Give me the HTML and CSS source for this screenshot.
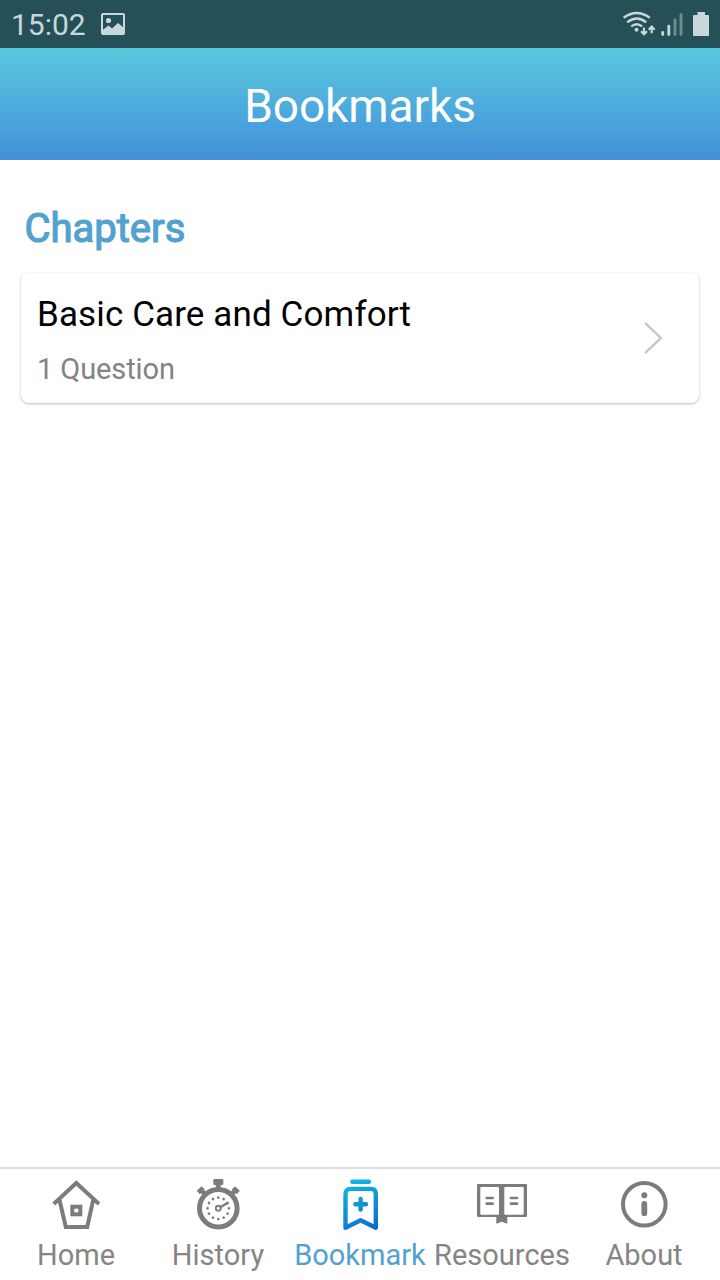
FILE: index.html
```html
<!DOCTYPE html>
<html lang="en">
<head>
<meta charset="utf-8">
<title>Bookmarks</title>
<link rel="stylesheet" href="styles.css">
</head>
<body>
<div class="screen">
  <div class="status">
    <span class="clock">15:02</span>
    <svg class="photo" width="24" height="22" viewBox="0 0 24 22">
      <rect x="1" y="1" width="22" height="20" rx="1" fill="none" stroke="currentColor" stroke-width="2"/>
      <circle cx="7.5" cy="7.5" r="2.6" fill="currentColor"/>
      <path d="M1 17.5 L7.5 12.5 L11 15.5 L17 10 L23 15 V21 H1 Z" fill="currentColor"/>
    </svg>
    <svg class="signals" width="110" height="48" viewBox="0 0 110 48">
      <g fill="none" stroke="currentColor" stroke-width="2.4">
        <path d="M13.6 17.8 Q26.7 8.2 39.8 17.8"/>
        <path d="M17.2 22.4 Q26.7 14.8 36.2 22.4"/>
        <path d="M21.2 26.4 Q26.7 22 32.2 26.4"/>
        <path d="M34 27.5 V34 M31 31.2 L34 34.3 L37 31.2 M41.7 33.3 V27 M38.7 29.7 L41.7 26.6 L44.7 29.7" stroke-width="2.1"/>
      </g>
      <circle cx="26.5" cy="29.8" r="2" fill="currentColor"/>
      <g stroke="currentColor" stroke-width="2.9" stroke-linecap="round">
        <path d="M52.7 32.4 V34.6 M58.8 26.3 V34.6"/>
        <path d="M65 20 V34.6 M71 14.6 V34.6" opacity=".45"/>
      </g>
      <path d="M84 15 H87.5 V12 H95 V15 H98 Q99 15 99 16 V35 Q99 36 98 36 H84 Q83 36 83 35 V16 Q83 15 84 15 Z" fill="currentColor"/>
    </svg>
  </div>
  <header class="header"><h1 class="title">Bookmarks</h1></header>
  <main class="content">
    <h2 class="section">Chapters</h2>
    <div class="card">
      <div class="info">
        <div class="name">Basic Care and Comfort</div>
        <div class="count">1 Question</div>
      </div>
      <svg class="chevron" width="20" height="34" viewBox="0 0 20 34">
        <path d="M1 1.8 L16.8 17 L1 32.2" fill="none" stroke="#c7c7c7" stroke-width="2.4"/>
      </svg>
    </div>
  </main>
  <nav class="tabs">
    <a class="tab">
      <svg class="icon" viewBox="0 0 60 56" fill="none" stroke="currentColor" stroke-width="4">
        <path d="M7.7 28 L30.3 7 L53 28"/>
        <path d="M13.5 24 L19.8 51 H41.2 L47.2 24"/>
        <rect x="26.3" y="30.7" width="8" height="7.6"/>
      </svg>
      <span class="label">Home</span>
    </a>
    <a class="tab">
      <svg class="icon" viewBox="0 0 60 56" fill="none" stroke="currentColor">
        <circle cx="30.3" cy="32.3" r="18.8" stroke-width="5"/>
        <circle cx="30.3" cy="32.3" r="10.7" stroke-width="2.7" stroke-linecap="round" pathLength="120" stroke-dasharray="0.01 9.99"/>
        <circle cx="30.3" cy="32.3" r="2.5" stroke-width="1.9"/>
        <path d="M32.7 31 L39 27.3" stroke-width="2.4" stroke-linecap="round"/>
        <path d="M30.3 8 V15" stroke-width="5"/>
        <rect x="25.3" y="3" width="10" height="6" rx="1.2" fill="currentColor" stroke="none"/>
        <path d="M10.3 16.5 L15.2 11.8 M13 14 L17.5 18.6 M50.3 16.5 L45.4 11.8 M47.6 14 L43.1 18.6" stroke-width="4.6"/>
      </svg>
      <span class="label">History</span>
    </a>
    <a class="tab active">
      <svg class="icon" viewBox="0 0 60 56" fill="none" stroke="url(#blue)" stroke-width="4.4" stroke-linecap="round" stroke-linejoin="round">
        <defs>
          <linearGradient id="blue" gradientUnits="userSpaceOnUse" x1="20" y1="4" x2="42" y2="54">
            <stop offset="0" stop-color="#13b9e4"/>
            <stop offset="1" stop-color="#0a6dcc"/>
          </linearGradient>
        </defs>
        <path d="M22.3 5.8 L38.9 5.81"/>
        <path d="M15.5 51.8 V18 Q15.5 12.9 20.5 12.9 H40.8 Q45.8 12.9 45.8 18 V51.8 L30.6 44.3 Z"/>
        <path d="M25.3 28.3 L36 28.31 M30.6 23 L30.61 33.6"/>
      </svg>
      <span class="label">Bookmark</span>
    </a>
    <a class="tab">
      <svg class="icon" viewBox="0 0 60 56" fill="currentColor">
        <path fill-rule="evenodd" d="M6 8 H54 Q55 8 55 9 V40 Q55 41 54 41 H35.3 V47.7 L29.8 45.7 L24.3 47.7 V41 H6 Q5 41 5 40 V9 Q5 8 6 8 Z M9.3 11 Q8.3 11 8.3 12 V37.7 Q8.3 38.7 9.3 38.7 H26 Q27 38.7 27 37.7 V12 Q27 11 26 11 Z M33.3 11 Q32.3 11 32.3 12 V37.7 Q32.3 38.7 33.3 38.7 H50.7 Q51.7 38.7 51.7 37.7 V12 Q51.7 11 50.7 11 Z"/>
        <path d="M14.7 22 H20.7 M14.7 27.7 H20.7 M39 22 H45 M39 27.7 H45" stroke="currentColor" stroke-width="2.7" stroke-linecap="round"/>
      </svg>
      <span class="label">Resources</span>
    </a>
    <a class="tab">
      <svg class="icon" viewBox="0 0 60 56" fill="none" stroke="currentColor">
        <circle cx="30.3" cy="28.3" r="21.3" stroke-width="4"/>
        <circle cx="30.3" cy="19.3" r="3" fill="currentColor" stroke="none"/>
        <path d="M30.3 28 V37.2" stroke-width="5.8" stroke-linecap="round"/>
      </svg>
      <span class="label">About</span>
    </a>
  </nav>
</div>
</body>
</html>
```
FILE: styles.css
```css
* { box-sizing: border-box; }
body { margin: 0; font-family: Roboto, sans-serif; background: #fff; }
.screen { display: flex; flex-direction: column; width: 720px; height: 1280px; overflow: hidden; }
.status { display: flex; align-items: center; height: 48px; padding-left: 11px; background: #265057; color: #c8d7da; }
.clock { width: 90px; padding-top: 2px; font-size: 30px; line-height: 46px; white-space: nowrap; }
.photo { display: block; }
.signals { display: block; margin-left: auto; }
.header { display: flex; align-items: center; justify-content: center; height: 112px; background: linear-gradient(#5ac8de, #4291db); }
.title { margin: 0; padding-top: 4px; font-size: 46px; line-height: 56px; font-weight: 400; color: #fff; letter-spacing: -0.1px; }
.content { flex: 1; padding: 44px 21px 0; }
.section { margin: 0 0 20px 3.5px; font-size: 40px; line-height: 49px; font-weight: 400; color: #51a2ce; -webkit-text-stroke: 1.2px #51a2ce; }
.card { display: flex; align-items: center; justify-content: space-between; height: 130px; padding: 0 35px 0 16px; border-radius: 8px; background: #fff; box-shadow: 0 1px 3px rgba(0,0,0,.28); }
.info { display: flex; flex-direction: column; gap: 16px; padding-top: 4px; }
.name { font-size: 35px; line-height: 42px; color: #000; white-space: nowrap; letter-spacing: 0.12px; }
.count { font-size: 29px; line-height: 34px; color: #838383; letter-spacing: -0.1px; }
.chevron { display: block; }
.tabs { display: flex; height: 113px; padding: 0 5px; border-top: 2px solid #e0e0e0; }
.tab { display: flex; flex-direction: column; align-items: center; width: 142px; padding-top: 7px; color: #7c7c7c; }
.icon { display: block; width: 60px; height: 56px; }
.label { margin-top: 6px; font-size: 29px; line-height: 34px; color: #858585; white-space: nowrap; }
.active .label { color: #51a2ce; }
```
